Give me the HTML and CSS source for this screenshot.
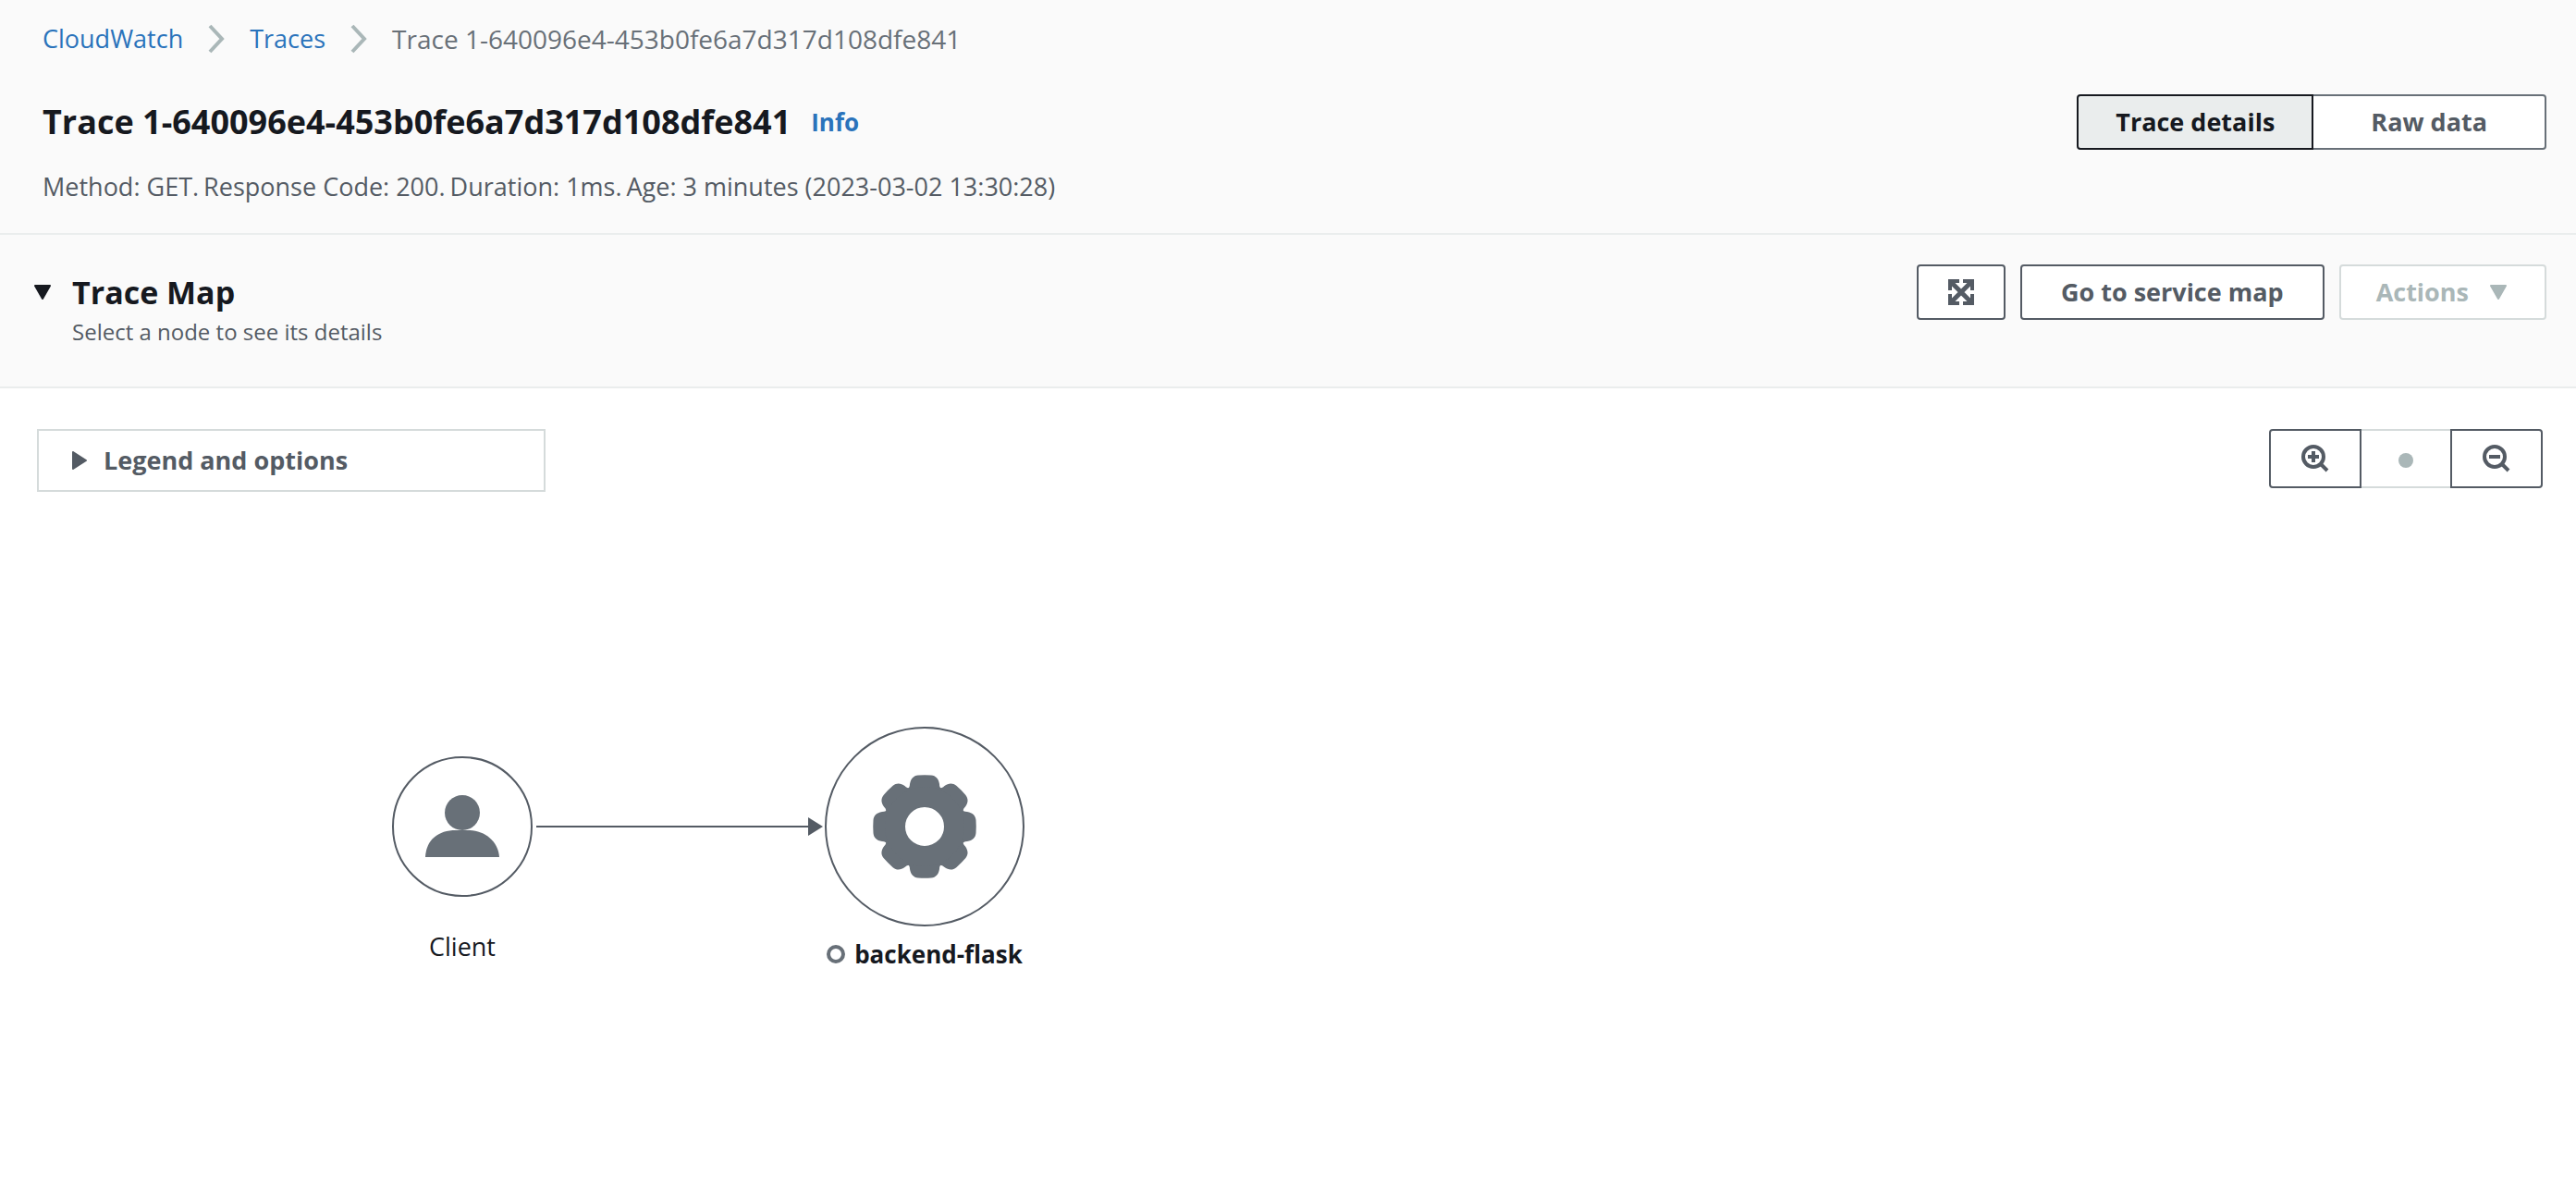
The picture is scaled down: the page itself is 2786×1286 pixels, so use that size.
FILE: index.html
```html
<!DOCTYPE html>
<html lang="en">
<head>
<meta charset="utf-8">
<meta name="viewport" content="width=device-width, initial-scale=1">
<title>CloudWatch - Trace details</title>
<link rel="stylesheet" href="styles.css">
</head>
<body>
<header class="page-header">
  <nav class="breadcrumbs" aria-label="Breadcrumbs">
    <a href="#cloudwatch">CloudWatch</a>
    <svg class="chevron" viewBox="0 0 20 32" aria-hidden="true"><path d="M3 2 L16 16 L3 30"/></svg>
    <a href="#traces">Traces</a>
    <svg class="chevron" viewBox="0 0 20 32" aria-hidden="true"><path d="M3 2 L16 16 L3 30"/></svg>
    <span class="current">Trace 1-640096e4-453b0fe6a7d317d108dfe841</span>
  </nav>
  <div class="title-row">
    <h1>Trace 1-640096e4-453b0fe6a7d317d108dfe841</h1>
    <a class="info" href="#info">Info</a>
    <div class="segmented">
      <button type="button" class="segment selected" aria-pressed="true">Trace details</button>
      <button type="button" class="segment" aria-pressed="false">Raw data</button>
    </div>
  </div>
  <p class="summary"><span>Method: GET.</span><span>Response Code: 200.</span><span>Duration: 1ms.</span><span>Age: 3 minutes (2023-03-02 13:30:28)</span></p>
</header>
<main>
  <section class="map-header">
    <button type="button" class="toggle" aria-label="Collapse Trace Map" aria-expanded="true">
      <svg viewBox="0 0 20 16" aria-hidden="true"><path d="M2 1H18L10 15Z"/></svg>
    </button>
    <div class="map-title">
      <h2>Trace Map</h2>
      <p>Select a node to see its details</p>
    </div>
    <div class="actions">
      <button type="button" class="button icon-button" aria-label="Full screen">
        <svg viewBox="0 0 28 28" aria-hidden="true"><path class="cross" d="M4 4 24 24M24 4 4 24"/><path d="M2 12V2H12M16 2H26V12M26 16V26H16M12 26H2V16"/></svg>
      </button>
      <button type="button" class="button">Go to service map</button>
      <button type="button" class="button menu-button" disabled>Actions
        <svg viewBox="0 0 20 16" aria-hidden="true"><path d="M2 1H18L10 15Z"/></svg>
      </button>
    </div>
  </section>
  <section class="canvas" aria-label="Trace map">
    <div class="canvas-tools">
      <button type="button" class="legend" aria-expanded="false">
        <svg viewBox="0 0 16 20" aria-hidden="true"><path d="M1 1V19L15 10Z"/></svg>
        Legend and options
      </button>
      <div class="zoom-group">
        <button type="button" aria-label="Zoom in">
          <svg viewBox="0 0 30 30" aria-hidden="true"><circle cx="13" cy="13" r="11"/><path d="M21 21 28 28M13 7V19M7 13H19"/></svg>
        </button>
        <button type="button" class="reset" aria-label="Reset zoom" disabled><span class="dot"></span></button>
        <button type="button" aria-label="Zoom out">
          <svg viewBox="0 0 30 30" aria-hidden="true"><circle cx="13" cy="13" r="11"/><path d="M21 21 28 28M7 13H19"/></svg>
        </button>
      </div>
    </div>
    <svg class="edge" viewBox="0 0 310 20" aria-hidden="true"><path class="edge-line" d="M0 10H296"/><path class="edge-head" d="M294 0V20L310 10Z"/></svg>
    <div class="node client">
      <svg viewBox="0 0 152 152" aria-hidden="true">
        <circle class="ring" cx="76" cy="76" r="75"/>
        <circle cx="76" cy="61" r="19"/>
        <path d="M36 109C37 90 50 80 69 80H83C100 80 115 92 116 109Z"/>
      </svg>
      <span>Client</span>
    </div>
    <div class="node service">
      <svg viewBox="0 0 216 216" aria-hidden="true">
        <circle class="ring" cx="108" cy="108" r="107"/>
        <defs>
          <path id="tooth" d="M88 68C91 67 92 65 92 62C93 56 96 53 101 52.500Q108 52 115 52.500C120 53 123 56 124 62C124 65 125 67 128 68L132 80H84Z"/>
        </defs>
        <use href="#tooth"/>
        <use href="#tooth" transform="rotate(45 108 108)"/>
        <use href="#tooth" transform="rotate(90 108 108)"/>
        <use href="#tooth" transform="rotate(135 108 108)"/>
        <use href="#tooth" transform="rotate(180 108 108)"/>
        <use href="#tooth" transform="rotate(225 108 108)"/>
        <use href="#tooth" transform="rotate(270 108 108)"/>
        <use href="#tooth" transform="rotate(315 108 108)"/>
        <circle class="hub" cx="108" cy="108" r="32"/>
      </svg>
      <span class="service-label"><i class="status"></i>backend-flask</span>
    </div>
  </section>
</main>
</body>
</html>
```
FILE: styles.css
```css
* {
  box-sizing: border-box;
}

body {
  margin: 0;
  min-height: 100vh;
  display: flex;
  flex-direction: column;
  background: #fff;
  color: #16191f;
  font-family: "Open Sans", "Noto Sans", sans-serif;
  font-size: 27px;
  line-height: 40px;
}

h1, h2, p {
  margin: 0;
}

a {
  color: #2a73bb;
  text-decoration: none;
}

button {
  font: inherit;
  font-weight: 700;
  color: #545b64;
  background: #fff;
  border: 2px solid #545b64;
  margin: 0;
  padding: 0;
}

svg {
  display: block;
  flex: none;
}

.page-header {
  background: #fafafa;
  border-bottom: 2px solid #eaeded;
  padding: 22px 32px 30px 46px;
}

.breadcrumbs {
  display: flex;
  flex-wrap: wrap;
  align-items: center;
  gap: 26px;
  color: #687078;
}

.current {
  font-size: 28px;
}

.chevron {
  width: 20px;
  height: 32px;
  fill: none;
  stroke: #aab7b8;
  stroke-width: 4;
}

.title-row {
  display: flex;
  align-items: center;
  margin-top: 40px;
}

h1, h2 {
  font-size: 36px;
  line-height: 48px;
  font-weight: 700;
}

h2 {
  font-size: 34px;
}

.info {
  margin-left: 22px;
  font-size: 26px;
  font-weight: 700;
}

.segmented {
  display: flex;
  margin-left: auto;
}

.segment {
  height: 60px;
  padding: 0 40px;
  border-color: #687078;
  border-left-width: 0;
  border-radius: 0 4px 4px 0;
}

.segment:last-child {
  padding: 0 62px;
}

.segment.selected {
  color: #16191f;
  background: #eaeded;
  border-color: #16191f;
  border-left-width: 2px;
  border-radius: 4px 0 0 4px;
}

.summary {
  display: flex;
  flex-wrap: wrap;
  gap: 5px;
  margin-top: 20px;
  color: #545b64;
}

.map-header {
  display: flex;
  align-items: flex-start;
  padding: 32px 32px 40px 36px;
  background: #fafafa;
  border-bottom: 2px solid #eaeded;
}

.toggle {
  margin: 22px 22px 0 0;
  background: none;
  border: 0;
}

.toggle svg, .menu-button svg {
  width: 20px;
  height: 16px;
  fill: currentColor;
  stroke: currentColor;
  stroke-width: 2;
  stroke-linejoin: round;
}

.toggle svg {
  color: #16191f;
}

.map-title {
  padding-top: 6px;
}

.map-title p {
  font-size: 24px;
  line-height: 38px;
  color: #545b64;
}

.actions {
  display: flex;
  gap: 16px;
  margin-left: auto;
}

.button {
  display: flex;
  align-items: center;
  height: 60px;
  padding: 0 42px;
  border-radius: 4px;
}

.icon-button {
  padding: 0 32px;
}

.icon-button svg {
  width: 28px;
  height: 28px;
  fill: none;
  stroke: currentColor;
  stroke-width: 4;
}

.icon-button .cross {
  stroke-width: 5;
}

.menu-button {
  gap: 22px;
  padding: 0 40px 0 38px;
  color: #aab7b8;
  border-color: #d5dbdb;
}

.canvas {
  position: relative;
  min-height: 866px;
  padding: 44px 36px 0 40px;
}

.canvas-tools {
  display: flex;
  justify-content: space-between;
  align-items: flex-start;
}

.legend {
  display: flex;
  align-items: center;
  gap: 18px;
  width: 550px;
  height: 68px;
  padding: 0 36px;
  border-color: #d5dbdb;
}

.legend svg {
  width: 16px;
  height: 20px;
  fill: currentColor;
  stroke: currentColor;
  stroke-width: 2;
  stroke-linejoin: round;
}

.zoom-group {
  display: flex;
}

.zoom-group button {
  display: flex;
  align-items: center;
  justify-content: center;
  width: 100px;
  height: 64px;
  border-radius: 4px 0 0 4px;
}

.zoom-group button:last-child {
  border-radius: 0 4px 4px 0;
}

.zoom-group .reset {
  width: 96px;
  border-color: #d5dbdb;
  border-width: 2px 0;
  border-radius: 0;
}

.zoom-group svg {
  width: 30px;
  height: 30px;
  fill: none;
  stroke: currentColor;
  stroke-width: 4;
}

.dot {
  width: 16px;
  height: 16px;
  margin-top: 4px;
  border-radius: 50%;
  background: #aab7b8;
}

.node {
  position: absolute;
  display: flex;
  flex-direction: column;
  align-items: center;
  fill: #687078;
}

.node .ring {
  fill: #fff;
  stroke: #545b64;
  stroke-width: 2;
}

.client {
  left: 424px;
  top: 398px;
  width: 152px;
  gap: 34px;
}

.client svg {
  width: 152px;
  height: 152px;
}

.service {
  left: 892px;
  top: 366px;
  width: 216px;
  gap: 10px;
}

.service svg {
  width: 216px;
  height: 216px;
}

.hub {
  fill: #fff;
  stroke: #687078;
  stroke-width: 22;
}

.service-label {
  display: flex;
  align-items: center;
  gap: 10px;
  font-size: 26px;
  font-weight: 700;
  white-space: nowrap;
}

.status {
  width: 20px;
  height: 20px;
  border: 4px solid #687078;
  border-radius: 50%;
}

.edge {
  position: absolute;
  left: 580px;
  top: 464px;
  width: 310px;
  height: 20px;
}

.edge-line {
  stroke: #545b64;
  stroke-width: 2;
}

.edge-head {
  fill: #545b64;
}
```
